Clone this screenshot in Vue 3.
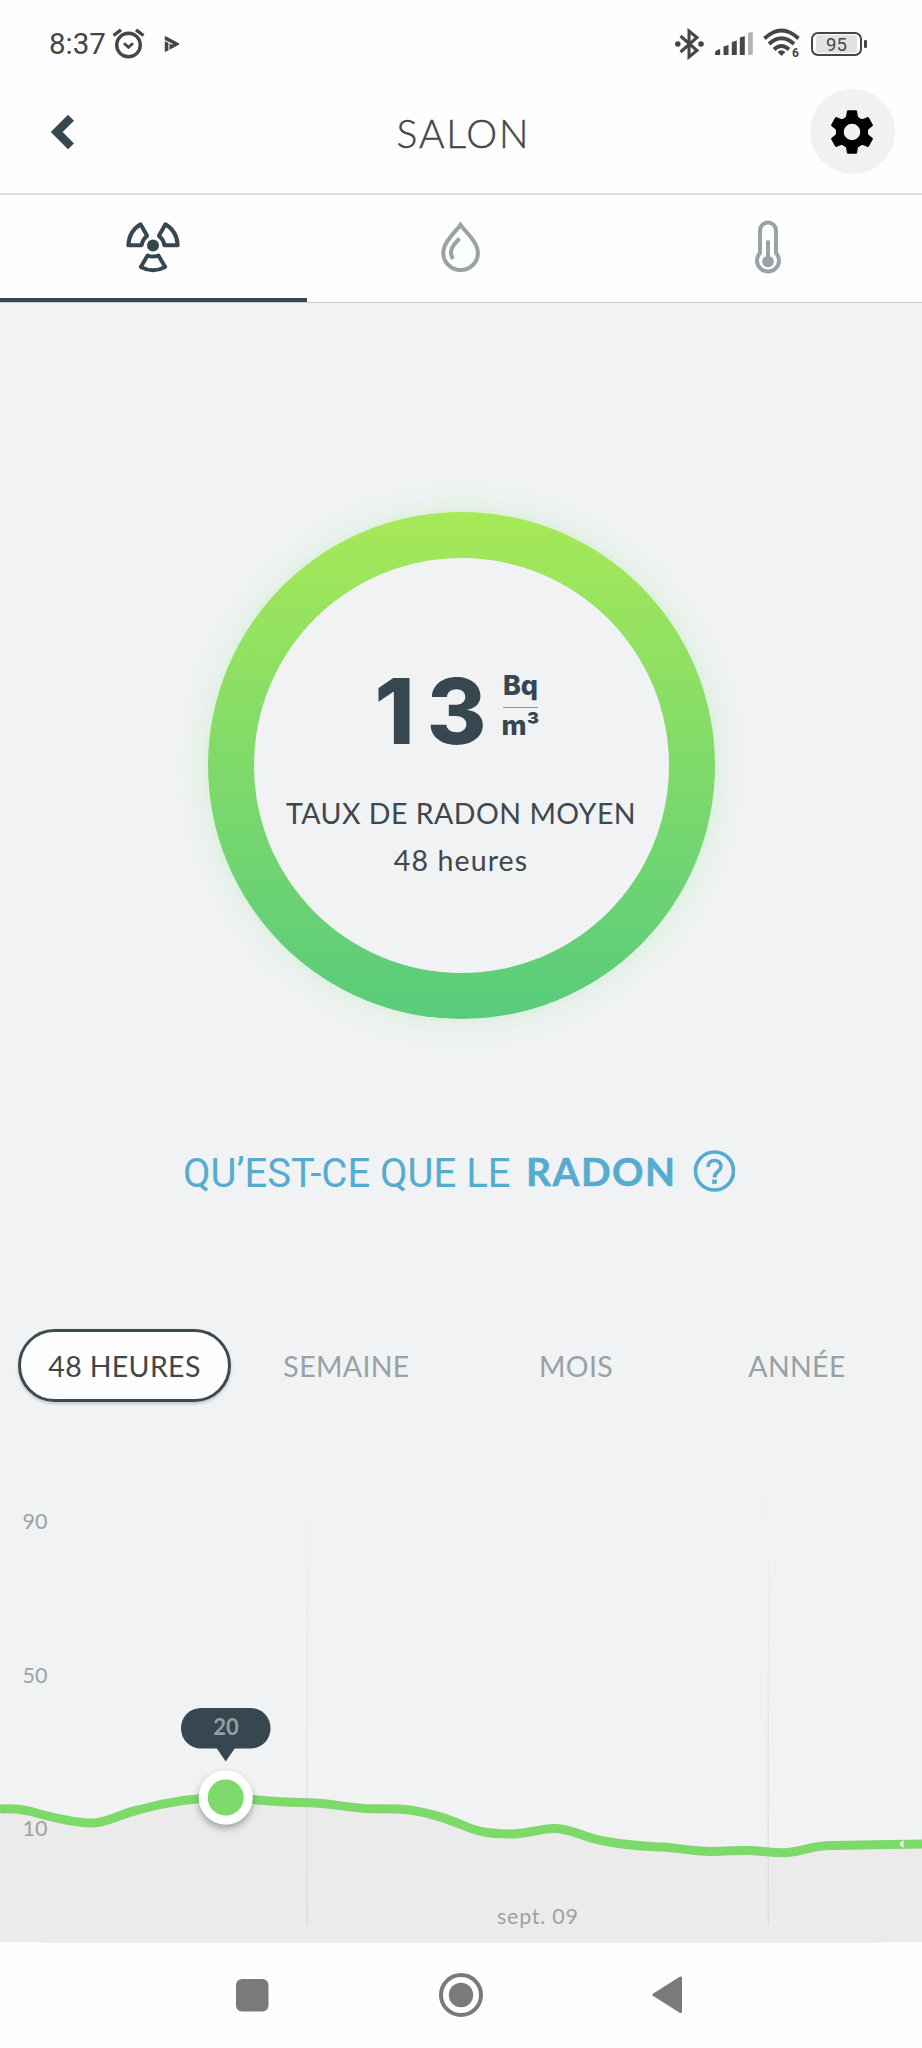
<template>
  <main class="screen">
    <div class="status">
      <span class="status__time">8:37</span>
      <svg class="status__alarm" width="34" height="32" viewBox="0 0 34 32" fill="none" stroke="#444647" stroke-width="3.4">
        <circle cx="16.5" cy="17" r="11.8" />
        <path d="M1.5 7.5 L9 1.8 M31.5 7.5 L24 1.8" />
        <path d="M12 15.2 L16.5 19.3 L21 15.2" stroke-width="2.8" />
      </svg>
      <svg class="status__play" width="16" height="16" viewBox="0 0 16 16">
        <path d="M1.5 1 L14.5 8 L1.5 15Z" fill="#444647" stroke="#444647" stroke-width="1.5" stroke-linejoin="round" />
        <path d="M0 4.2 L8.5 8.2 M5 6.5 V14" fill="none" stroke="#fefefe" stroke-width="1.1" />
      </svg>
      <div class="status__right">
        <svg width="30" height="32" viewBox="0 0 30 32" fill="none" stroke="#444647" stroke-width="3">
          <path d="M5.5 8 L22 22.5 L14 29 V3 L22 9.5 L5.5 24" />
          <circle cx="2.8" cy="16" r="2.8" fill="#444647" stroke="none" />
          <circle cx="26" cy="16" r="2.8" fill="#444647" stroke="none" />
        </svg>
        <svg class="status__signal" width="38" height="26" viewBox="0 0 38 26" fill="#444647">
          <path d="M0 24 V22 Q0 19 5.2 18 V24Z" />
          <path d="M8.5 24 V15.5 L13.5 14 V24Z" />
          <path d="M16.8 24 V11 L21.8 9.5 V24Z" />
          <path d="M24.8 24 V6.5 L29.8 5 V24Z" />
          <path d="M33 24 V2 L37.8 0.5 V24Z" fill="#b3b4b5" />
        </svg>
        <svg class="status__wifi" width="42" height="34" viewBox="0 -1 42 34" fill="none" stroke="#444647" stroke-width="3.8">
          <path d="M1.5 10.5 Q18.5 -5.5 35.5 10.5" />
          <path d="M6 16 Q18.5 4.5 31 16" />
          <path d="M11 21.5 Q18.5 14.5 26 21.5" />
          <path d="M14.5 24 Q18.5 20.5 22.5 24 L18.5 28Z" fill="#444647" stroke="none" />
          <text x="29" y="28.5" class="status__six">6</text>
        </svg>
        <span class="battery"><span class="battery__level">95</span></span>
      </div>
    </div>

    <header class="header">
      <button type="button" class="header__back">
        <svg width="24" height="36" viewBox="0 0 24 36" fill="none" stroke="#37474f" stroke-width="8.4">
          <path d="M20 3.8 L5.7 18 L20 32.4" />
        </svg>
      </button>
      <h1 class="header__title">SALON</h1>
      <button type="button" class="header__settings">
        <svg width="46" height="46" viewBox="-23 -23 46 46">
          <circle r="12.2" fill="none" stroke="#000" stroke-width="7.8" />
          <path
            v-for="angle in [0, 60, 120, 180, 240, 300]"
            :key="angle"
            :transform="`rotate(${angle})`"
            d="M-7.5 -13 L-5.8 -16 L-5.2 -20.5 Q-5 -21.7 -3.8 -21.7 H3.8 Q5 -21.7 5.2 -20.5 L5.8 -16 L7.5 -13Z"
          />
        </svg>
      </button>
    </header>

    <nav class="tabs">
      <button type="button" class="tabs__item tabs__item--active">
        <svg width="58" height="58" viewBox="-28 -27.5 58 58" fill="none" stroke="#37474f" stroke-width="4" stroke-linejoin="round">
          <circle r="6" fill="#37474f" stroke="none" />
          <path v-for="angle in [0, 120, 240]" :key="angle" :transform="`rotate(${angle})`" d="M-5.4 10 Q0 12.2 5.4 10 L12.2 21.4 Q0 28 -12.2 21.4Z" />
        </svg>
      </button>
      <button type="button" class="tabs__item">
        <svg width="44" height="54" viewBox="0 0 44 54" fill="none" stroke="#98a3a5" stroke-width="4">
          <path d="M21.5 4.8 C16.5 12 4.3 22 4.3 33 A17.3 17 0 0 0 38.9 33 C38.9 22 26.5 12 21.5 4.8Z" />
          <path d="M20.5 18.5 C14 25 9 31 14 39" />
        </svg>
      </button>
      <button type="button" class="tabs__item">
        <svg width="30" height="56" viewBox="0 -1 30 56" fill="none" stroke="#98a3a5" stroke-width="4">
          <path d="M7 33 V10.5 A8 8 0 0 1 23 10.5 V33 A11 11 0 1 1 7 33Z" />
          <path d="M15 22 V40" stroke-linecap="round" />
          <circle cx="15" cy="41.5" r="5.8" fill="#98a3a5" stroke="none" />
        </svg>
      </button>
    </nav>

    <section class="gauge">
      <div class="gauge__ring">
        <div class="gauge__inner">
          <div class="gauge__reading">
            <strong class="gauge__value">13</strong>
            <span class="gauge__unit">
              <span class="gauge__bq">Bq</span>
              <span class="gauge__m3">m³</span>
            </span>
          </div>
          <p class="gauge__label">TAUX DE RADON MOYEN</p>
          <p class="gauge__period">48 heures</p>
        </div>
      </div>
    </section>

    <a class="help">
      <span class="help__lead">QU’EST-CE QUE LE</span>
      <strong class="help__topic">RADON</strong>
      <svg width="42" height="42" viewBox="0 0 42 42" fill="none" stroke="#55abd0" stroke-width="3.6">
        <circle cx="21.5" cy="21" r="19" />
        <path d="M15 17 C15 8.5 28 8.5 28 16.5 C28 21.5 21.5 21.5 21.5 27.5" />
        <path d="M21.5 29.6 V33.8" stroke-width="4.6" />
      </svg>
    </a>

    <div class="ranges">
      <button
        v-for="range in ranges"
        :key="range.id"
        type="button"
        :class="['ranges__item', `ranges__item--${range.id}`, selected === range.id ? 'ranges__item--active' : '']"
        @click="selected = range.id"
      >
        {{ range.label }}
      </button>
    </div>

    <svg class="chart" width="922" height="473" viewBox="0 1470 922 473">
      <defs>
        <linearGradient id="grid" gradientUnits="userSpaceOnUse" x1="0" y1="1490" x2="0" y2="1924">
          <stop offset="0" stop-color="#dfe1e3" stop-opacity="0.1" />
          <stop offset="0.6" stop-color="#dfe1e3" stop-opacity="0.7" />
          <stop offset="1" stop-color="#dcdedf" />
        </linearGradient>
        <filter id="shadow" x="-50%" y="-50%" width="200%" height="200%">
          <feDropShadow dx="0" dy="4" stdDeviation="3.5" flood-color="#37474f" flood-opacity="0.45" />
        </filter>
      </defs>
      <path :d="`${line} V1943 H0Z`" fill="#ebebeb" />
      <rect v-for="x in [306.5, 767.5]" :key="x" :x="x" y="1490" width="1.5" height="434" fill="url(#grid)" />
      <path :d="line" fill="none" stroke="#7dd96a" stroke-width="9" />
      <path d="M903.5 1840 Q896 1844 903.5 1848Z" fill="#e6f7e2" />
      <g class="chart__label">
        <text v-for="tick in ticks" :key="tick.value" x="47.5" :y="tick.y" text-anchor="end">{{ tick.value }}</text>
        <text x="497" y="1924" textLength="81">sept. 09</text>
      </g>
      <rect x="181" y="1708" width="89.5" height="40.5" rx="20" fill="#37474f" />
      <path d="M216.5 1748 H235 L225.7 1761.5Z" fill="#37474f" />
      <text class="chart__tip" x="226" y="1734.5" text-anchor="middle">20</text>
      <circle cx="225.7" cy="1797.5" r="27" fill="#fff" filter="url(#shadow)" />
      <circle cx="225.7" cy="1797.5" r="18" fill="#7dd96a" />
      <path d="M0 1943 V1942 H30 L50 1943Z M922 1943 V1942 H892 L872 1943Z" fill="#fff" />
    </svg>

    <footer class="sysnav">
      <svg width="33" height="33"><rect width="32.5" height="32.5" rx="6" fill="#7a7a7a" /></svg>
      <svg width="46" height="46" viewBox="-23 -23 46 46">
        <circle r="20" fill="none" stroke="#7a7a7a" stroke-width="4" />
        <circle r="12.2" fill="#7a7a7a" />
      </svg>
      <svg width="32" height="40" viewBox="0 0 32 40" fill="#7a7a7a" stroke="#7a7a7a" stroke-width="3" stroke-linejoin="round">
        <path d="M28.5 3 V36.5 L2 19.8Z" />
      </svg>
    </footer>
  </main>
</template>

<script setup>
import { ref } from 'vue';

const selected = ref('day');

const ranges = [
  { id: 'day', label: '48 HEURES' },
  { id: 'week', label: 'SEMAINE' },
  { id: 'month', label: 'MOIS' },
  { id: 'year', label: 'ANNÉE' },
];

const ticks = [
  { value: 90, y: 1529 },
  { value: 50, y: 1683 },
  { value: 10, y: 1836 },
];

const line =
  'M0 1809 C12 1808 20 1809 29 1811 C50 1817 75 1823 93 1823 C109 1822 120 1814 138 1810 ' +
  'C163 1803 195 1797.5 225 1797.5 C255 1799 270 1802 300 1802.5 C330 1802.5 340 1807 365 1808.5 ' +
  'C385 1809 395 1808 410 1810 C435 1814 447 1819 461 1824.5 C480 1833 490 1833.5 510 1834 ' +
  'C530 1834 540 1828 556 1828.5 C572 1829 582 1837 604 1841 C630 1846 640 1846 661 1847 ' +
  'C680 1848 690 1851 711 1851.5 C730 1851.5 735 1850 750 1850.5 C765 1851 775 1853.5 788 1852.5 ' +
  'C805 1851 813 1845.5 830 1845.5 C860 1845.5 880 1844.5 922 1844';
</script>

<style>
body {
  margin: 0;
  background: #fff;
}
</style>

<style scoped>
.screen {
  display: flex;
  flex-direction: column;
  width: 922px;
  height: 2048px;
  background: #f0f2f4;
  color: #37474f;
  font-family: Lato, sans-serif;
  overflow: hidden;
}

button {
  border: none;
  background: none;
  padding: 0;
  font-family: inherit;
  color: inherit;
}

svg {
  display: block;
  flex: none;
}

p,
h1 {
  margin: 0;
}

.status {
  display: flex;
  align-items: center;
  height: 88px;
  padding: 0 55px 0 49px;
  box-sizing: border-box;
  background: #fefefe;
  color: #444647;
  font-family: Roboto, sans-serif;
}

.status__time {
  width: 63px;
  font-size: 29.5px;
}

.status__play {
  margin-left: 18px;
}

.status__right {
  display: flex;
  align-items: center;
  margin-left: auto;
}

.status__signal {
  margin-left: 10px;
}

.status__wifi {
  margin-left: 10px;
}

.status__six {
  font-size: 12px;
  font-weight: 700;
  fill: #444647;
  stroke: none;
}

.battery {
  display: flex;
  align-items: center;
  width: 56px;
  margin-left: 6px;
}

.battery::after {
  content: '';
  width: 3px;
  height: 8px;
  margin-left: 2px;
  border-radius: 1px;
  background: #444647;
}

.battery__level {
  width: 41px;
  height: 18px;
  border: 2.5px solid #444647;
  border-radius: 7px;
  padding: 1px 3px;
  background: #e2e2e3;
  background-clip: content-box;
  font-size: 18.5px;
  line-height: 20px;
  text-align: center;
}

.header {
  display: flex;
  align-items: center;
  justify-content: space-between;
  height: 107px;
  padding: 0 27px 18px 51px;
  box-sizing: border-box;
  border-bottom: 2px solid #dcdee0;
  background: #fefefe;
}

.header__back {
  width: 60px;
}

.header__title {
  padding: 3px 0 0 6px;
  color: #3f474b;
  font-size: 39px;
  font-weight: 300;
  letter-spacing: 1.9px;
  -webkit-text-stroke: 0.4px #3f474b;
}

.header__settings {
  display: flex;
  align-items: center;
  justify-content: center;
  width: 85px;
  height: 85px;
  border-radius: 50%;
  background: #f0f1f3;
}

.tabs {
  display: grid;
  grid-template-columns: repeat(3, 1fr);
  height: 108px;
  box-sizing: border-box;
  border-bottom: 1px solid #cbd0d3;
  background: #fefefe;
}

.tabs__item {
  display: flex;
  align-items: center;
  justify-content: center;
  border-bottom: 4px solid transparent;
}

.tabs__item--active {
  border-color: #3b464c;
}

.gauge {
  display: flex;
  justify-content: center;
  padding-top: 209px;
}

.gauge__ring {
  width: 507px;
  height: 507px;
  padding: 46px;
  box-sizing: border-box;
  border-radius: 50%;
  background: linear-gradient(#a7e957, #58cb7c);
  box-shadow: 0 0 26px rgba(125, 235, 110, 0.28);
}

.gauge__inner {
  display: flex;
  flex-direction: column;
  align-items: center;
  height: 415px;
  padding-top: 106px;
  box-sizing: border-box;
  border-radius: 50%;
  background: #f0f2f4;
}

.gauge__reading {
  display: flex;
  height: 90px;
  padding-right: 8px;
}

.gauge__value {
  font-family: Inter, sans-serif;
  font-size: 91px;
  font-weight: 800;
  line-height: 94px;
  letter-spacing: 12px;
}

.gauge__unit {
  display: flex;
  flex-direction: column;
  align-items: center;
  margin: 3px 0 0 3px;
  font-family: Inter, sans-serif;
  font-size: 27px;
  font-weight: 800;
}

.gauge__bq {
  padding-bottom: 3px;
  border-bottom: 1.5px solid #8c9599;
  line-height: 37px;
}

.gauge__m3 {
  line-height: 36px;
}

.gauge__label {
  margin-top: 41px;
  color: #3f474b;
  font-size: 28.5px;
  line-height: 36px;
  letter-spacing: 0.5px;
  white-space: nowrap;
}

.gauge__period {
  margin-top: 11px;
  color: #3f474b;
  font-size: 28.5px;
  line-height: 36px;
  letter-spacing: 1.1px;
}

.help {
  display: flex;
  align-items: center;
  height: 50px;
  margin: 127px 0 0 183px;
  color: #55abd0;
}

.help__lead {
  width: 343px;
  padding-top: 4px;
  font-family: Roboto, sans-serif;
  font-size: 40px;
  white-space: nowrap;
}

.help__topic {
  width: 167px;
  font-size: 39px;
  font-weight: 700;
  letter-spacing: 1.4px;
  -webkit-text-stroke: 0.5px #55abd0;
}

.ranges {
  display: flex;
  height: 73px;
  margin: 133px 0 0 18px;
}

.ranges__item {
  box-sizing: border-box;
  border: 3px solid transparent;
  color: #98a1a4;
  font-size: 28.5px;
  letter-spacing: 0.35px;
}

.ranges__item--day {
  width: 213px;
}

.ranges__item--week {
  width: 231px;
}

.ranges__item--month {
  width: 228px;
}

.ranges__item--year {
  width: 214px;
}

.ranges__item--active {
  border-color: #3f4a50;
  border-radius: 37px;
  background: #fefefe;
  box-shadow: 0 2px 3px rgba(55, 71, 79, 0.25);
  color: #3f474b;
}

.chart {
  margin-top: auto;
}

.chart__label {
  fill: #9aa2a5;
  font-size: 21.5px;
}

.chart__tip {
  fill: #94a0a4;
  font-size: 22px;
  font-weight: 700;
}

.sysnav {
  display: flex;
  align-items: center;
  justify-content: space-between;
  height: 105px;
  padding: 0 238px 1px 236px;
  box-sizing: border-box;
  background: #fefefe;
}
</style>
